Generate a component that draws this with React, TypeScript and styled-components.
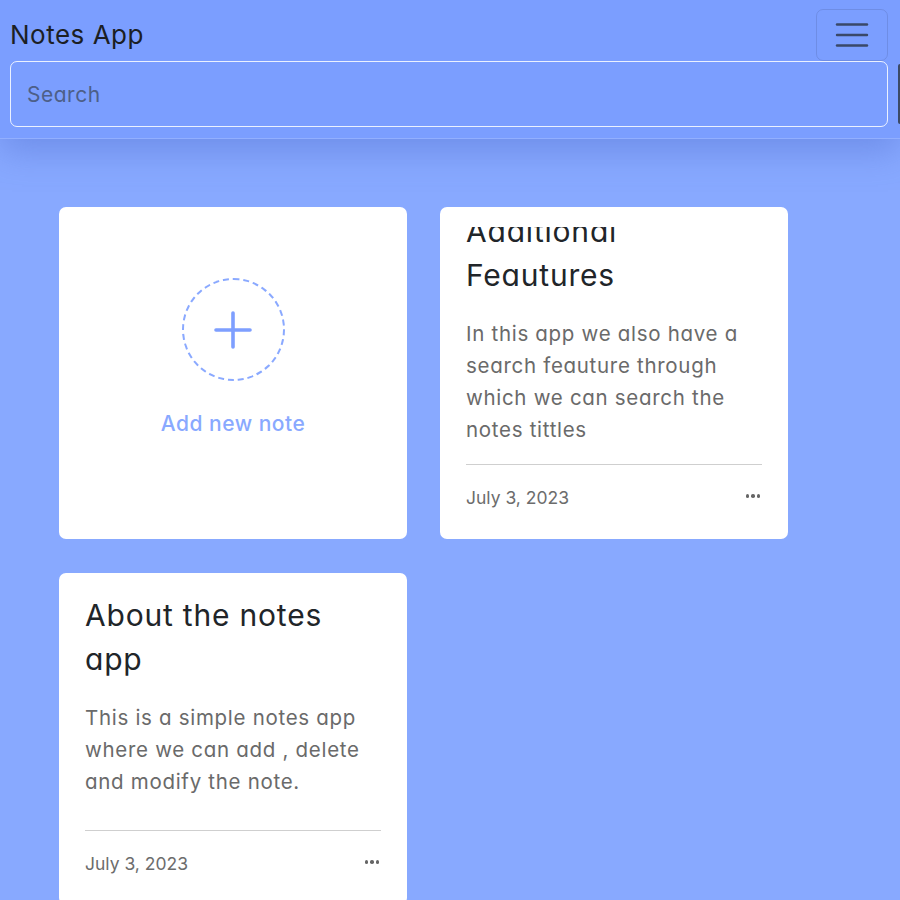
import React from "react";
import styled, { createGlobalStyle } from "styled-components";

const Global = createGlobalStyle`
  html, body { margin: 0; padding: 0; }
  body {
    background: #88a9ff;
    font-family: Inter, "Noto Sans", sans-serif;
    font-feature-settings: "cv11" 1;
    overflow: hidden;
    min-height: 900px;
  }
  * { box-sizing: border-box; }
`;

const Header = styled.header`
  background: #7b9eff;
  padding: 9px 12px 11px 10px;
  border-bottom: 1px solid rgba(255, 255, 255, 0.18);
  box-shadow: 0 12px 34px rgba(70, 100, 200, 0.4);
  display: flex;
  flex-direction: column;
  position: relative;
  overflow: hidden;
`;

const TopRow = styled.div`
  display: flex;
  align-items: center;
  justify-content: space-between;
  height: 52px;
`;

const Brand = styled.span`
  font-size: 26px;
  color: #1c1f24;
  font-weight: 400;
  letter-spacing: 0.5px;
  margin-top: -1px;
`;

const Toggler = styled.button`
  width: 72px;
  height: 52px;
  border: 1px solid rgba(0, 0, 0, 0.1);
  border-radius: 7px;
  background: transparent;
  display: flex;
  align-items: center;
  justify-content: center;
  padding: 0;
`;

const SearchRow = styled.div`
  display: flex;
  margin-right: -12px;
`;

const SearchInput = styled.input`
  flex: 1;
  min-width: 0;
  height: 66px;
  border: 1.5px solid rgba(255, 255, 255, 0.85);
  border-radius: 7px;
  background: transparent;
  padding: 0 16px;
  font-family: Inter, "Noto Sans", sans-serif;
  font-feature-settings: "cv11" 1;
  font-size: 21px;
  letter-spacing: 0.5px;
  color: #2a3550;
  outline: none;
  &::placeholder {
    color: #4d5f88;
  }
`;

const SearchEdge = styled.span`
  flex: 0 0 2px;
  margin-left: 10px;
  height: 60px;
  align-self: center;
  background: #3c4a66;
  border-radius: 2px 0 0 2px;
`;

const Grid = styled.main`
  display: grid;
  grid-template-columns: repeat(2, 348px);
  column-gap: 33px;
  row-gap: 34px;
  padding: 68px 0 0 59px;
`;

const Card = styled.div`
  background: #ffffff;
  border-radius: 7px;
  height: 332px;
  display: flex;
  flex-direction: column;
`;

const AddCard = styled(Card)`
  align-items: center;
  justify-content: center;
  padding-bottom: 44px;
  gap: 30px;
`;

const AddCircle = styled.div`
  width: 103px;
  height: 103px;
  border-radius: 50%;
  border: 2px dashed #8aa9ff;
  display: flex;
  align-items: center;
  justify-content: center;
  margin-top: 12px;
`;

const AddLabel = styled.span`
  font-size: 21px;
  font-weight: 500;
  letter-spacing: 0.5px;
  color: #89a9ff;
`;

const NoteCard = styled(Card)`
  padding: 20px 26px 0 26px;
`;

const NoteBody = styled.div<{ $clipTop?: boolean }>`
  flex: 1;
  min-height: 0;
  overflow: hidden;
  display: flex;
  flex-direction: column;
  justify-content: ${(p) => (p.$clipTop ? "flex-end" : "flex-start")};
`;

const NoteTitle = styled.h2`
  margin: 0 0 21px 0;
  font-size: 30px;
  line-height: 44px;
  font-weight: 400;
  letter-spacing: 0.8px;
  color: #212529;
  flex-shrink: 0;
`;

const NoteText = styled.p`
  margin: 0 0 18px 0;
  font-size: 20.5px;
  line-height: 32px;
  letter-spacing: 0.7px;
  color: #6a6a6a;
  flex-shrink: 0;
`;

const NoteFooter = styled.div`
  border-top: 1px solid #cfcfcf;
  padding: 20px 0 28px 0;
  display: flex;
  align-items: center;
  justify-content: space-between;
  height: 75px;
`;

const DateText = styled.span`
  font-size: 17.5px;
  line-height: 26px;
  color: #6c6c6c;
`;

const Dots = styled.span`
  display: flex;
  gap: 2px;
  margin-right: 2px;
  margin-top: -4px;
  span {
    width: 3.5px;
    height: 3.5px;
    border-radius: 50%;
    background: #666;
  }
`;

const HamburgerIcon = () => (
  <svg width="34" height="30" viewBox="0 0 34 30">
    <g stroke="#3a4868" strokeWidth="2.4" strokeLinecap="round">
      <line x1="2" y1="4.5" x2="32" y2="4.5" />
      <line x1="2" y1="15" x2="32" y2="15" />
      <line x1="2" y1="25.5" x2="32" y2="25.5" />
    </g>
  </svg>
);

const PlusIcon = () => (
  <svg width="38" height="38" viewBox="0 0 38 38">
    <g stroke="#7e9fff" strokeWidth="3.6" strokeLinecap="round">
      <line x1="2" y1="19" x2="36" y2="19" />
      <line x1="19" y1="2" x2="19" y2="36" />
    </g>
  </svg>
);

type Note = { title: string; text: string; date: string; clip?: boolean };

const notes: Note[] = [
  {
    title: "Additional Feautures",
    text: "In this app we also have a search feauture through which we can search the notes tittles",
    date: "July 3, 2023",
    clip: true,
  },
  {
    title: "About the notes app",
    text: "This is a simple notes app where we can add , delete and modify the note.",
    date: "July 3, 2023",
  },
];

const NoteItem = ({ note }: { note: Note }) => (
  <NoteCard>
    <NoteBody $clipTop={note.clip}>
      <NoteTitle>{note.title}</NoteTitle>
      <NoteText>{note.text}</NoteText>
    </NoteBody>
    <NoteFooter>
      <DateText>{note.date}</DateText>
      <Dots>
        <span />
        <span />
        <span />
      </Dots>
    </NoteFooter>
  </NoteCard>
);

export default function App() {
  return (
    <>
      <Global />
      <Header>
        <TopRow>
          <Brand>Notes App</Brand>
          <Toggler aria-label="menu">
            <HamburgerIcon />
          </Toggler>
        </TopRow>
        <SearchRow>
          <SearchInput placeholder="Search" />
          <SearchEdge />
        </SearchRow>
      </Header>
      <Grid>
        <AddCard>
          <AddCircle>
            <PlusIcon />
          </AddCircle>
          <AddLabel>Add new note</AddLabel>
        </AddCard>
        {notes.map((n) => (
          <NoteItem key={n.title} note={n} />
        ))}
      </Grid>
    </>
  );
}
